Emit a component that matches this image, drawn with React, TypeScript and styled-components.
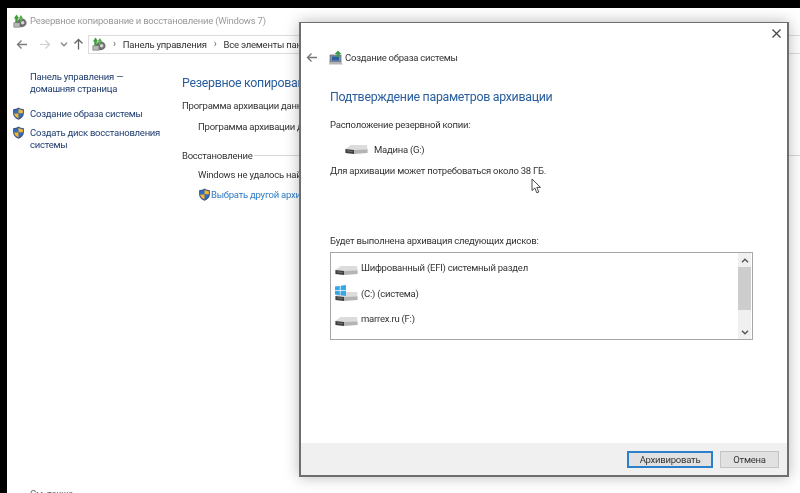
import React from 'react';
import styled, { createGlobalStyle } from 'styled-components';

const GlobalStyle = createGlobalStyle`
  html, body {
    margin: 0;
    padding: 0;
    background: #000;
  }
  body {
    font-family: Roboto, "Liberation Sans", sans-serif;
    font-size: 9.5px;
    letter-spacing: -0.025em;
    color: #2b2b2b;
  }
`;

const Screen = styled.div`
  position: relative;
  width: 800px;
  height: 493px;
  overflow: hidden;
  box-sizing: border-box;
  padding: 8px 0 0 7px;
  background: #000;
  filter: blur(0.45px);
`;

const Explorer = styled.div`
  height: 100%;
  background: #fff;
  display: flex;
  flex-direction: column;
`;

const TitleBar = styled.div`
  height: 25px;
  display: flex;
  align-items: center;
  gap: 3px;
  padding-left: 6px;
  color: #9a9a9a;
`;

const Toolbar = styled.div`
  height: 22px;
  display: flex;
  align-items: center;
  padding-left: 9px;
  color: #8a8a8a;
`;

const NavButton = styled.span<{ $w: number; $light?: boolean }>`
  width: ${({ $w }) => $w}px;
  display: flex;
  justify-content: flex-start;
  color: ${({ $light }) => ($light ? '#cfcfcf' : '#7c7c7c')};
`;

const AddressBar = styled.div`
  flex: 1;
  height: 17px;
  display: flex;
  align-items: center;
  gap: 7px;
  margin-left: 3px;
  padding-left: 3px;
  border: 1px solid #dcdcdc;
  border-right: none;
  white-space: nowrap;
  color: #333;
`;

const Crumb = styled.span`
  color: #666;
  font-size: 10px;
  line-height: 1;
`;

const Body = styled.div`
  flex: 1;
  display: flex;
  min-height: 0;
`;

const Sidebar = styled.aside`
  width: 136px;
  padding: 16px 16px 0 23px;
  color: #1f3c6e;
  line-height: 12px;
  display: flex;
  flex-direction: column;
  position: relative;
`;

const SideLink = styled.div<{ $top: number }>`
  margin-top: ${({ $top }) => $top}px;
`;

const SideTask = styled(SideLink)`
  position: relative;
`;

const TaskShield = styled.span`
  position: absolute;
  left: -18px;
  top: -1px;
`;

const SeeAlso = styled.div`
  margin-top: 337px;
  color: #666;
`;

const Main = styled.main`
  flex: 1;
  padding-top: 19px;
  white-space: nowrap;
  color: #333;
`;

const MainTitle = styled.h1`
  margin: 0 0 7px;
  font-size: 12.4px;
  letter-spacing: -0.3px;
  line-height: 18px;
  font-weight: 400;
  color: #2a5f9e;
`;

const SectionLabel = styled.div`
  line-height: 13px;
`;

const Indented = styled.div<{ $top: number }>`
  margin: ${({ $top }) => $top}px 0 0 16px;
  line-height: 13px;
  display: flex;
  align-items: center;
`;

const RuleLabel = styled.div`
  margin-top: 16px;
  line-height: 13px;
  display: flex;
  align-items: center;
  gap: 2px;
  &::after {
    content: '';
    flex: 1;
    height: 1px;
    background: #d8d8d8;
  }
`;

const LinkText = styled.span`
  color: #2f7cc4;
`;

const Dialog = styled.section`
  position: absolute;
  left: 299px;
  top: 22px;
  width: 490px;
  height: 455px;
  box-sizing: border-box;
  background: #fff;
  border: 1px solid #6e6e6e;
  border-width: 1px 2px 2px 2px;
  box-shadow: 0 0 14px rgba(0, 0, 0, 0.28);
  display: flex;
  flex-direction: column;
`;

const CloseButton = styled.span`
  position: absolute;
  right: 5px;
  top: 5px;
  display: flex;
`;

const DialogHeader = styled.header`
  height: 22px;
  margin-top: 23px;
  display: flex;
  align-items: center;
  padding-left: 5px;
  color: #333;
`;

const BackArrow = styled.span`
  display: flex;
  width: 23px;
`;

const HeaderLabel = styled.span`
  margin-left: 1px;
`;

const DialogBody = styled.div`
  flex: 1;
  padding: 20px 34px 0 29px;
  color: #333;
`;

const DialogTitle = styled.h2`
  margin: 0;
  font-size: 12.4px;
  letter-spacing: -0.3px;
  line-height: 18px;
  font-weight: 400;
  color: #2a5f9e;
`;

const Label = styled.div<{ $top: number }>`
  margin-top: ${({ $top }) => $top}px;
  line-height: 13px;
`;

const TargetRow = styled.div`
  margin: 11px 0 0 15px;
  height: 14px;
  display: flex;
  align-items: center;
  gap: 6px;
`;

const DiskBox = styled.div`
  margin-top: 5px;
  height: 88px;
  box-sizing: border-box;
  border: 1px solid #a6a6a6;
  display: flex;
`;

const DiskList = styled.ul`
  flex: 1;
  list-style: none;
  margin: 0;
  padding: 7px 0 0 4px;
`;

const DiskRow = styled.li`
  height: 25.5px;
  display: flex;
  align-items: flex-start;
  gap: 3px;
  line-height: 15px;
`;

const DiskIcon = styled.span`
  position: relative;
  display: flex;
  margin-top: 5px;
`;

const WinBadge = styled.span`
  position: absolute;
  left: 0;
  top: -6px;
  display: flex;
`;

const Scrollbar = styled.div`
  width: 13px;
  margin-right: 1px;
  background: #f0f0f0;
  display: flex;
  flex-direction: column;
`;

const ScrollArrow = styled.span`
  height: 14px;
  display: flex;
  align-items: center;
  justify-content: center;
`;

const ScrollThumb = styled.div`
  height: 43px;
  background: #cdcdcd;
`;

const ScrollTrack = styled.div`
  flex: 1;
`;

const Footer = styled.footer`
  height: 32px;
  background: #f0f0f0;
  display: flex;
  align-items: center;
  justify-content: flex-end;
  gap: 7px;
  padding-right: 8px;
`;

const Button = styled.button<{ $primary?: boolean; $w: number }>`
  width: ${({ $w }) => $w}px;
  height: 17px;
  padding: 0;
  box-sizing: border-box;
  font: inherit;
  letter-spacing: inherit;
  color: #333;
  background: #e1e1e1;
  border: ${({ $primary }) => ($primary ? '2px solid #2b7fcb' : '1px solid #c4c4c4')};
`;

const Cursor = styled.span`
  position: absolute;
  left: 531px;
  top: 178px;
  display: flex;
`;

const Shield = ({ size = 13 }: { size?: number }) => (
  <svg width={size} height={size} viewBox="0 0 14 14">
    <path d="M7 .6 C5.4 1.8 3.4 2.3 1.2 2.4 V7 C1.2 10.2 3.8 12.5 7 13.6 C10.2 12.5 12.8 10.2 12.8 7 V2.4 C10.6 2.3 8.6 1.8 7 .6Z" fill="#39518a" />
    <path d="M7 1.8 V7 H2.3 V3.4 C4 3.3 5.7 2.8 7 1.8Z" fill="#2d6fc0" />
    <path d="M7 1.8 C8.3 2.8 10 3.3 11.7 3.4 V7 H7Z" fill="#f1b733" />
    <path d="M7 7 H11.7 C11.6 9.4 9.6 11.3 7 12.3Z" fill="#2d6fc0" />
    <path d="M7 7 V12.3 C4.4 11.3 2.4 9.4 2.3 7Z" fill="#f1b733" />
  </svg>
);

const PanelIcon = () => (
  <svg width="14" height="14" viewBox="0 0 16 16">
    <ellipse cx="10" cy="10" rx="5.5" ry="5" fill="#6f6f6f" />
    <circle cx="11" cy="10" r="2" fill="#d6d6d6" />
    <rect x="1" y="10" width="7" height="5" fill="#b9b9b9" stroke="#6a6a6a" strokeWidth="0.7" />
    <path d="M4 0.5 L7 5 H5.4 V10 H2.6 V5 H1Z" fill="#3f9b3a" />
    <path d="M9 1 L11.6 5 H10.2 V8.5 H7.8 V5 H6.4Z" fill="#58b04a" />
  </svg>
);

const SystemImageIcon = () => (
  <svg width="15" height="15" viewBox="0 0 15 15">
    <rect x="1" y="5" width="11" height="7" fill="#7f94ad" stroke="#666" strokeWidth="0.7" />
    <rect x="3" y="6.5" width="7" height="4" fill="#2c5f9e" />
    <path d="M0.5 12 H12.5 L13.5 14.5 H0Z" fill="#b5b5b5" />
    <path d="M9 0.5 L12.5 4 H10.6 V7 H7.6 V4 H5.6Z" fill="#3e9d47" />
  </svg>
);

const DriveIcon = () => (
  <svg width="23" height="11" viewBox="0 0 23 10">
    <path d="M5.5 0.6 L22 0.6 L22.6 5.5 L9 6.2 L0.4 4.6Z" fill="#dcdcdc" />
    <path d="M0.4 4.4 L9 5.4 V9.6 L0.4 8.6Z" fill="#3f3f3f" />
    <path d="M9 5.6 L22.6 5 V8.6 L9 9.6Z" fill="#b4b4b4" />
    <path d="M2 6.4 L7.5 7" stroke="#8d8d8d" strokeWidth="0.7" />
  </svg>
);

const WindowsLogo = () => (
  <svg width="11" height="11" viewBox="0 0 11 11">
    <path d="M0 1.6 L4.8 0.9 V5.2 H0Z" fill="#39a6e6" />
    <path d="M5.6 0.8 L11 0 V5.2 H5.6Z" fill="#39a6e6" />
    <path d="M0 6 H4.8 V10.2 L0 9.5Z" fill="#39a6e6" />
    <path d="M5.6 6 H11 V11 L5.6 10.3Z" fill="#39a6e6" />
  </svg>
);

const ArrowLeft = ({ color = 'currentColor' }: { color?: string }) => (
  <svg width="12" height="11" viewBox="0 0 12 11" fill="none" stroke={color} strokeWidth="1.3">
    <path d="M11 5.5 H1.5 M5.5 1.5 L1.5 5.5 L5.5 9.5" />
  </svg>
);

const ArrowRight = () => (
  <svg width="12" height="11" viewBox="0 0 12 11" fill="none" stroke="currentColor" strokeWidth="1.2">
    <path d="M1 5.5 H10.5 M6.5 1.5 L10.5 5.5 L6.5 9.5" />
  </svg>
);

const ArrowUp = () => (
  <svg width="11" height="12" viewBox="0 0 11 12" fill="none" stroke="#666" strokeWidth="1.3">
    <path d="M5.5 11.5 V1.5 M1.5 5.5 L5.5 1.5 L9.5 5.5" />
  </svg>
);

const Chevron = ({ up, color = '#555' }: { up?: boolean; color?: string }) => (
  <svg width="8" height="5" viewBox="0 0 8 5" fill="none" stroke={color} strokeWidth="1.4">
    <path d={up ? 'M1 4.2 L4 1.2 L7 4.2' : 'M1 0.8 L4 3.8 L7 0.8'} />
  </svg>
);

const disks = [
  { name: 'Шифрованный (EFI) системный раздел' },
  { name: '(C:) (система)', system: true },
  { name: 'marrex.ru (F:)' },
];

const App: React.FC = () => {
  return (
    <>
      <GlobalStyle />
      <Screen>
        <Explorer>
          <TitleBar>
            <PanelIcon />
            <span>Резервное копирование и восстановление (Windows 7)</span>
          </TitleBar>
          <Toolbar>
            <NavButton $w={23}><ArrowLeft /></NavButton>
            <NavButton $w={21} $light><ArrowRight /></NavButton>
            <NavButton $w={13}><Chevron color="#888" /></NavButton>
            <NavButton $w={12}><ArrowUp /></NavButton>
            <AddressBar>
              <PanelIcon />
              <Crumb>›</Crumb>
              <span>Панель управления</span>
              <Crumb>›</Crumb>
              <span>Все элементы панели</span>
            </AddressBar>
          </Toolbar>
          <Body>
            <Sidebar>
              <SideLink $top={0}>
                Панель управления —<br />домашняя страница
              </SideLink>
              <SideTask $top={13}>
                <TaskShield><Shield /></TaskShield>
                Создание образа системы
              </SideTask>
              <SideTask $top={7}>
                <TaskShield><Shield /></TaskShield>
                Создать диск восстановления системы
              </SideTask>
              <SeeAlso>См. также</SeeAlso>
            </Sidebar>
            <Main>
              <MainTitle>Резервное копирование</MainTitle>
              <SectionLabel>Программа архивации данных</SectionLabel>
              <Indented $top={8}>Программа архивации данных</Indented>
              <RuleLabel>Восстановление</RuleLabel>
              <Indented $top={6}>Windows не удалось найти</Indented>
              <Indented $top={7}>
                <Shield />
                <LinkText>Выбрать другой архив</LinkText>
              </Indented>
            </Main>
          </Body>
        </Explorer>

        <Dialog>
          <CloseButton>
            <svg width="11" height="11" viewBox="0 0 11 11" stroke="#444" strokeWidth="1.2">
              <path d="M1.5 1.5 L9.5 9.5 M9.5 1.5 L1.5 9.5" />
            </svg>
          </CloseButton>
          <DialogHeader>
            <BackArrow><ArrowLeft color="#777" /></BackArrow>
            <SystemImageIcon />
            <HeaderLabel>Создание образа системы</HeaderLabel>
          </DialogHeader>
          <DialogBody>
            <DialogTitle>Подтверждение параметров архивации</DialogTitle>
            <Label $top={12}>Расположение резервной копии:</Label>
            <TargetRow>
              <DriveIcon />
              <span>Мадина (G:)</span>
            </TargetRow>
            <Label $top={8}>Для архивации может потребоваться около 38 ГБ.</Label>
            <Label $top={57}>Будет выполнена архивация следующих дисков:</Label>
            <DiskBox>
              <DiskList>
                {disks.map((disk) => (
                  <DiskRow key={disk.name}>
                    <DiskIcon>
                      <DriveIcon />
                      {disk.system && <WinBadge><WindowsLogo /></WinBadge>}
                    </DiskIcon>
                    <span>{disk.name}</span>
                  </DiskRow>
                ))}
              </DiskList>
              <Scrollbar>
                <ScrollArrow><Chevron up /></ScrollArrow>
                <ScrollThumb />
                <ScrollTrack />
                <ScrollArrow><Chevron /></ScrollArrow>
              </Scrollbar>
            </DiskBox>
          </DialogBody>
          <Footer>
            <Button $primary $w={86}>Архивировать</Button>
            <Button $w={59}>Отмена</Button>
          </Footer>
        </Dialog>

        <Cursor>
          <svg width="11" height="16" viewBox="0 0 11 16">
            <path d="M1 1 V12.5 L3.8 10 L5.8 14.8 L7.8 14 L5.8 9.4 H9.5Z" fill="#fff" stroke="#333" strokeWidth="0.9" />
          </svg>
        </Cursor>
      </Screen>
    </>
  );
};

export default App;
